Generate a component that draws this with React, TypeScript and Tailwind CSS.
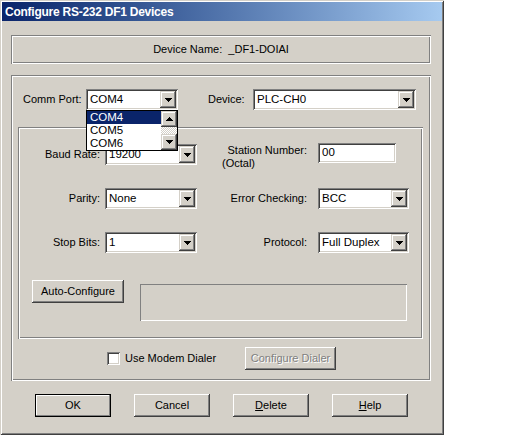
import React from 'react';

const sunken =
	'shadow-[inset_1px_1px_0_#808080,inset_-1px_-1px_0_#fff,inset_2px_2px_0_#404040,inset_-2px_-2px_0_#d4d0c8]';
const scrollBtn =
	'shadow-[inset_-1px_-1px_0_#404040,inset_1px_1px_0_#d4d0c8,inset_-2px_-2px_0_#808080,inset_2px_2px_0_#fff]';
const etched =
	'shadow-[inset_1px_1px_0_#808080,inset_-1px_-1px_0_#fff,inset_2px_2px_0_#fff,inset_-2px_-2px_0_#808080]';

const Tri = ({up}: { up?: boolean }) => (
	<svg width="7" height="4" viewBox="0 0 7 4" shapeRendering="crispEdges" className={up ? 'rotate-180' : ''}>
		<rect x="0" y="0" width="7" height="1"/>
		<rect x="1" y="1" width="5" height="1"/>
		<rect x="2" y="2" width="3" height="1"/>
		<rect x="3" y="3" width="1" height="1"/>
	</svg>
);

const Combo = ({value, className = '', children}: { value: string; className?: string; children?: React.ReactNode }) => (
	<div className={`relative flex h-[21px] shrink-0 bg-white p-[2px] ${sunken} ${className}`}>
		<span className="flex-1 pl-[2px] text-[11.5px] leading-[17px] whitespace-nowrap overflow-hidden">{value}</span>
		<span className={`flex h-[17px] w-[16px] items-center justify-center bg-[#d4d0c8] ${scrollBtn}`}>
			<Tri/>
		</span>
		{children}
	</div>
);

const Button = ({children, className = '', isDefault, disabled}: {
	children: React.ReactNode;
	className?: string;
	isDefault?: boolean;
	disabled?: boolean
}) => (
	<div
		className={`flex h-[23px] shrink-0 items-center justify-center bg-[#d4d0c8] text-[11px] ${
			isDefault
				? 'border border-black shadow-[inset_-1px_-1px_0_#808080,inset_1px_1px_0_#fff]'
				: 'shadow-[inset_-1px_-1px_0_#404040,inset_1px_1px_0_#fff,inset_-2px_-2px_0_#808080]'
		} ${disabled ? 'text-[#808080] [text-shadow:1px_1px_0_#fff]' : 'text-black'} ${className}`}
	>
		{children}
	</div>
);

const Label = ({children, className = ''}: { children: React.ReactNode; className?: string }) => (
	<span className={`shrink-0 text-[11px] leading-[21px] whitespace-nowrap ${className}`}>{children}</span>
);

export default function App() {
	return (
		<div className="min-h-screen bg-white text-black [font-family:'Liberation_Sans',Arial,sans-serif]">
			<div
				className="relative flex h-[435px] w-[444px] flex-col bg-[#d4d0c8] shadow-[inset_1px_1px_0_#d4d0c8,inset_-1px_-1px_0_#404040,inset_2px_2px_0_#fff,inset_-2px_-2px_0_#808080]">
				{/* title bar */}
				<div className="mx-[2px] mt-[2px] flex h-[19px] items-center bg-linear-to-r from-[#0a246a] to-[#a6caf0] pl-[3px]">
					<span className="text-[12px] font-bold tracking-[-0.25px] text-white">
						Configure RS-232 DF1 Devices
					</span>
				</div>

				{/* device name */}
				<div className={`ml-[11px] mt-[14px] flex h-[29px] w-[420px] items-center justify-center ${etched}`}>
					<span className="text-[11px] whitespace-pre">Device Name:  _DF1-DOIAI</span>
				</div>

				{/* main group */}
				<div className={`ml-[11px] mt-[11px] flex h-[306px] w-[420px] flex-col ${etched}`}>
					<div className="ml-[12px] mt-[14px] flex">
						<Label className="w-[63px]">Comm Port:</Label>
						<Combo value="COM4" className="z-10 w-[92px]">
							<div className="absolute left-0 top-full flex h-[41px] w-[92px] border border-black bg-white">
								<div className="flex flex-1 flex-col text-[11.5px] leading-[13px]">
									<span className="h-[13px] bg-[#0a246a] pl-[3px] text-white">COM4</span>
									<span className="h-[13px] pl-[3px]">COM5</span>
									<span className="h-[13px] pl-[3px]">COM6</span>
								</div>
								<div className="flex w-[16px] flex-col">
									<span className={`flex h-[16px] items-center justify-center bg-[#d4d0c8] ${scrollBtn}`}>
										<Tri up/>
									</span>
									<span
										className="h-[7px] bg-[repeating-conic-gradient(#d4d0c8_0_25%,#fff_0_50%)] bg-[length:2px_2px]"/>
									<span className={`flex h-[16px] items-center justify-center bg-[#d4d0c8] ${scrollBtn}`}>
										<Tri/>
									</span>
								</div>
							</div>
						</Combo>
						<Label className="ml-[30px] w-[45px]">Device:</Label>
						<Combo value="PLC-CH0" className="w-[163px]"/>
					</div>

					{/* inner group */}
					<div className={`ml-[7px] mt-[17px] flex h-[212px] w-[405px] flex-col ${etched}`}>
						<div className="mt-[17px] flex h-[21px] items-start">
							<Label className="w-[82px] text-right">Baud Rate:</Label>
							<Combo value="19200" className="ml-[5px] w-[92px]"/>
							<div className="ml-[18px] flex w-[92px] shrink-0 flex-col text-[11px] leading-[13px]">
								<span className="text-right whitespace-nowrap">Station Number:</span>
								<span className="pl-[7px]">(Octal)</span>
							</div>
							<div className={`ml-[11px] -mt-[1px] h-[20px] w-[78px] shrink-0 bg-white p-[2px] ${sunken}`}>
								<div className="pl-[2px] text-[11.5px] leading-[15px]">00</div>
							</div>
						</div>
						<div className="mt-[23px] flex">
							<Label className="w-[82px] text-right">Parity:</Label>
							<Combo value="None" className="ml-[5px] w-[92px]"/>
							<Label className="w-[110px] text-right">Error Checking:</Label>
							<Combo value="BCC" className="ml-[11px] w-[91px]"/>
						</div>
						<div className="mt-[23px] flex">
							<Label className="w-[82px] text-right">Stop Bits:</Label>
							<Combo value="1" className="ml-[5px] w-[92px]"/>
							<Label className="w-[110px] text-right">Protocol:</Label>
							<Combo value="Full Duplex" className="ml-[11px] w-[91px]"/>
						</div>
						<div className="ml-[14px] mt-[27px] flex items-start">
							<Button className="w-[92px]">Auto-Configure</Button>
							<div
								className="ml-[16px] mt-[4px] h-[37px] w-[267px] shadow-[inset_1px_1px_0_#808080,inset_-1px_-1px_0_#fff]"/>
						</div>
					</div>

					<div className="mt-[8px] flex items-center">
						<div className="ml-[96px] flex w-[138px] items-center">
							<span className={`h-[13px] w-[13px] bg-white ${sunken}`}/>
							<span className="ml-[5px] text-[11px]">Use Modem Dialer</span>
						</div>
						<Button disabled className="w-[91px]">Configure Dialer</Button>
					</div>
				</div>

				{/* bottom buttons */}
				<div className="ml-[35px] mt-[13px] flex gap-[23px]">
					<Button isDefault className="w-[76px]">OK</Button>
					<Button className="w-[76px]">Cancel</Button>
					<Button className="w-[76px]"><span><span className="underline">D</span>elete</span></Button>
					<Button className="w-[76px]"><span><span className="underline">H</span>elp</span></Button>
				</div>
			</div>
		</div>
	);
}
